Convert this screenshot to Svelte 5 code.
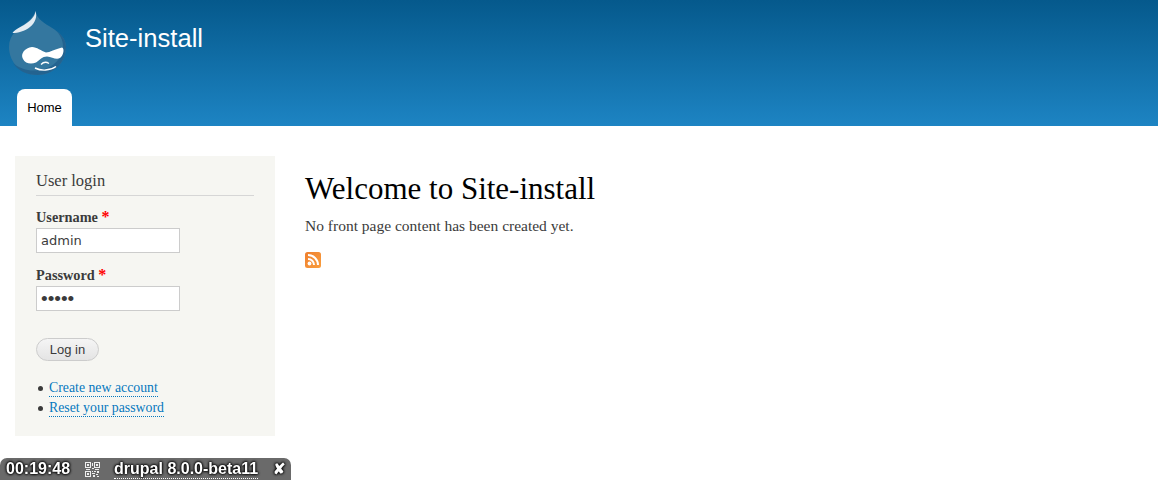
<script>
  const title = 'Site-install';
</script>

<div class="page">
  <header class="head">
    <div class="brand">
      <svg class="logo" width="62" height="68" viewBox="6 10 62 68" aria-hidden="true">
        <path d="M35.500 11 C36 17 42 22 49 26 C59 32 66 38 66 47 C66 63 53 75 37.500 75 C22 75 9 63 9 47 C9 34 19 28 26 23 C30 20 34 16 35.500 11 Z" fill="#34779f"/>
        <path d="M55.500 30 C62 35 66 40 66 47 C66 63 53 75 37.500 75 C27 75 18 71 13 63 C20 69 30 72 40 70 C54 68 63 57 63 46 C63 40 59.500 34 55.500 30 Z" fill="#236390"/>
        <path d="M35.500 11 C35 17 30 21 24 25 C19 28 14 30 12.500 33 C18 33 25 31 30 27 C35 23 37.500 17 35.500 11 Z" fill="#e3ecf3"/>
        <path d="M32 47 C37 47 41 51 46 52.500 C50 52.500 55 49 62 47.500 C64.500 48 64 55 60 58 C56 60 52 57 47 56.500 C42 56.500 40 60 36 62.500 C31 64.500 25 63.500 23 59 C20 54 25 47.500 32 47 Z" fill="#fff"/>
        <path d="M41 64.500 C43 62.500 46 61.500 49 63.500" fill="none" stroke="#fff" stroke-width="1.400"/>
        <path d="M35 68 C41 71 50 71 56 66.500" fill="none" stroke="#fff" stroke-width="1.400"/>
      </svg>
      <span class="site">{title}</span>
    </div>
    <nav class="tabs"><a class="tab" href="#home">Home</a></nav>
  </header>

  <main class="layout">
    <aside class="side">
      <h2 class="side-title">User login</h2>
      <div class="field">
        <label class="lab" for="u">Username <span class="req">*</span></label>
        <input id="u" class="inp" type="text" value="admin" />
      </div>
      <div class="field">
        <label class="lab" for="p">Password <span class="req">*</span></label>
        <input id="p" class="inp pw" type="password" value="admin" />
      </div>
      <button class="btn" type="button">Log in</button>
      <ul class="links">
        <li><a href="#new">Create new account</a></li>
        <li><a href="#reset">Reset your password</a></li>
      </ul>
    </aside>
    <section class="content">
      <h1 class="pagetitle">Welcome to {title}</h1>
      <p class="none">No front page content has been created yet.</p>
      <svg class="rss" width="16" height="16" viewBox="0 0 16 16" aria-hidden="true">
        <defs>
          <linearGradient id="rg" x1="0" y1="0" x2="1" y2="1">
            <stop offset="0" stop-color="#ef7f2e"/><stop offset="1" stop-color="#f99e3e"/>
          </linearGradient>
        </defs>
        <rect width="16" height="16" rx="2.500" fill="url(#rg)"/>
        <circle cx="4.500" cy="11.500" r="1.900" fill="#fff"/>
        <path d="M3 7 a6 6 0 0 1 6 6" fill="none" stroke="#fff" stroke-width="2"/>
        <path d="M3 3 a10 10 0 0 1 10 10" fill="none" stroke="#fff" stroke-width="2"/>
      </svg>
    </section>
  </main>

  <div class="bar">
    <span class="time">00:19:48</span>
    <svg class="qr" width="15" height="15" viewBox="0 0 15 15" aria-hidden="true">
      <g fill="none" stroke="#eee" stroke-width="1">
        <rect x=".5" y=".5" width="5" height="5"/><rect x="9.500" y=".5" width="5" height="5"/><rect x=".5" y="9.500" width="5" height="5"/>
      </g>
      <g fill="#eee">
        <rect x="2" y="2" width="2" height="2"/><rect x="11" y="2" width="2" height="2"/><rect x="2" y="11" width="2" height="2"/>
        <rect x="7" y="1" width="1" height="3"/><rect x="7" y="6" width="2" height="1"/><rect x="1" y="7" width="4" height="1"/>
        <rect x="10" y="7" width="4" height="1"/><rect x="7" y="9" width="1" height="1"/><rect x="9" y="9" width="2" height="1"/>
        <rect x="12" y="9" width="2" height="2"/><rect x="7" y="11" width="3" height="1"/><rect x="11" y="12" width="2" height="1"/>
        <rect x="8" y="13" width="2" height="2"/><rect x="12" y="14" width="2" height="1"/>
      </g>
    </svg>
    <a class="app" href="#app">drupal 8.0.0-beta11</a>
    <span class="close">✘</span>
  </div>
</div>

<style>
  :global(body) { margin: 0; background: #fff; }
  .page { font-family: "Liberation Serif", serif; color: #3b3b3b; min-height: 480px; }
  .head { height: 126px; background: linear-gradient(#05598c, #1d84c3); display: flex; flex-direction: column; justify-content: space-between; }
  .brand { display: flex; align-items: flex-start; padding: 10px 0 0 6px; gap: 17px; }
  .logo { display: block; }
  .site { font-family: "Liberation Sans", sans-serif; font-size: 25.600px; line-height: 29px; color: #fff; margin-top: 14px; }
  .tabs { padding-left: 17px; display: flex; }
  .tab { width: 55px; height: 37px; box-sizing: border-box; background: #fff; border-radius: 8px 8px 0 0; color: #000; font: 13px/37px "Liberation Sans", sans-serif; text-align: center; text-decoration: none; }
  .layout { display: flex; padding: 30px 0 0 15px; gap: 30px; }
  .side { width: 260px; height: 280px; box-sizing: border-box; background: #f6f6f2; padding: 14px 21px 0; }
  .side-title { margin: 0 0 14px; font-size: 16.500px; line-height: 22px; font-weight: normal; color: #3b3b3b; border-bottom: 1px solid #d6d6d6; padding-bottom: 3px; }
  .field { margin-bottom: 15px; }
  .lab { display: block; font-size: 14.300px; line-height: 15px; font-weight: bold; margin-bottom: 3px; }
  .req { color: #f00; font-size: 16px; line-height: 0; }
  .inp { display: block; width: 144px; height: 25px; box-sizing: border-box; border: 1px solid #ccc; background: #fff; padding: 0 4px; margin: 0; font: 13px "DejaVu Sans", sans-serif; color: #3b3b3b; outline: none; }
  .pw { font: 19px "Liberation Sans", sans-serif; }
  .btn { display: block; width: 63px; height: 23px; margin: 27px 0 0; padding: 0; border: 1px solid #ccc; border-radius: 12px; background: linear-gradient(#f5f5f5, #e4e4e4); font: 13px "Liberation Sans", sans-serif; color: #3a3a3a; }
  .links { margin: 17px 0 0; padding: 0; list-style: none; font-size: 13.800px; line-height: 20px; }
  .links li { display: flex; align-items: center; gap: 6px; padding-left: 2px; height: 20px; }
  .links li::before { content: ""; width: 5px; height: 5px; border-radius: 50%; background: #3b3b3b; }
  .links a { color: #0678be; text-decoration: none; border-bottom: 1px dotted #0678be; line-height: 16px; }
  .content { padding-top: 16px; flex: 1; }
  .pagetitle { margin: 0; font-size: 31px; line-height: 34px; font-weight: normal; color: #000; }
  .none { margin: 10px 0 0; font-size: 15.500px; line-height: 20px; }
  .rss { display: block; margin-top: 16px; }
  .bar { position: fixed; left: 0; bottom: 0; width: 291px; height: 22px; box-sizing: border-box; background: #6a6a6a; border-radius: 7px 7px 0 0; display: flex; align-items: center; font: bold 16px/20px "Liberation Sans", sans-serif; color: #fff; padding-left: 6px; }
  .time, .app, .close { text-shadow: 0 0 3px #000, 0 0 3px #000, 0 0 2px #000; }
  .qr { margin-left: 15px; }
  .app { margin-left: 14px; color: #fff; text-decoration: none; border-bottom: 1px dotted #fff; line-height: 18px; }
  .close { margin-left: 15px; font-size: 15px; }
</style>
